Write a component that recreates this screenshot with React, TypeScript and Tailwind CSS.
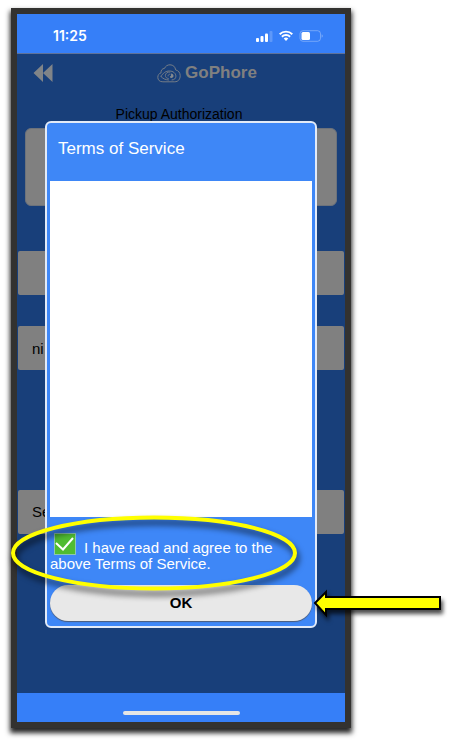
import { useState } from "react";

function StatusBar() {
    return (
        <div className="flex h-10 items-center justify-between border-b border-[#5f7299] bg-[#367ff8] pl-9 pr-[22px] pt-1 text-white">
            <span className="font-['Inter',sans-serif] text-sm font-semibold">11:25</span>
            <div className="flex items-center gap-1.5">
                <svg width="17" height="12" viewBox="0 0 17 12" fill="currentColor" aria-hidden="true">
                    <rect x="0" y="8" width="3" height="4" rx="1" />
                    <rect x="4.500" y="6" width="3" height="6" rx="1" />
                    <rect x="9" y="3.500" width="3" height="8.500" rx="1" />
                    <rect x="13.500" y="1" width="3" height="11" rx="1" opacity=".2" />
                </svg>
                <svg width="14" height="11" viewBox="0 0 14 11" fill="none" stroke="currentColor" strokeWidth="1.900" aria-hidden="true">
                    <path d="M.7 4.200a9 9 0 0 1 12.600 0" />
                    <path d="M2.900 6.700a5.900 5.900 0 0 1 8.200 0" />
                    <path d="M4.700 8.500a3.300 3.300 0 0 1 4.600 0L7 10.900z" fill="currentColor" stroke="none" />
                </svg>
                <svg width="24" height="12" viewBox="0 0 24 12" aria-hidden="true">
                    <rect x="1" y=".7" width="20.500" height="10.600" rx="3" fill="none" stroke="#fff" strokeOpacity=".3" />
                    <rect x="2.500" y="2" width="8.500" height="8" rx="1.500" fill="#fff" />
                    <path d="M22.700 4.200v3.600c1.300-.6 1.300-3 0-3.600z" fill="#fff" fillOpacity=".4" />
                </svg>
            </div>
        </div>
    );
}

function CloudLogo() {
    return (
        <svg width="24" height="19" viewBox="0 0 24 19" fill="none" stroke="#747d88" strokeLinecap="round" aria-hidden="true">
            <path d="M5.500 17.800C2.600 17.800.8 16 .8 13.300c0-2.200 1.300-4 3.200-4.400C3.800 6.300 5.200 4.500 7.500 4.400 8.500 2 10.600.8 13 .8c3.200 0 5.300 2.100 5.600 5.100 2.700.5 4.600 2.800 4.600 5.800 0 3.500-2 6.100-5.100 6.100z" />
            <path d="M4 12.500C6 8.800 9 7 12.300 7c3.900 0 6.600 2.300 6.600 5.200 0 2.200-1.700 3.800-3.900 3.800" />
            <path d="M4 12.500c1.900 2.200 4.300 3.300 7.500 3.500" />
            <path d="M13 8c-2.700-.2-4.600 1.400-4.600 3.500 0 1.700 1.200 2.900 2.900 3M13 10.200c-1.200 0-1.900.7-1.900 1.700" strokeWidth=".9" />
            <path d="M14 9.500c1.500 0 2.500 1 2.500 2.300s-.9 2.200-2.100 2.200c-1 0-1.500-.7-1.500-1.500 1.100 0 1.400-1 1.100-3z" fill="#848a90" stroke="none" />
        </svg>
    );
}

function PickupForm() {
    return (
        <div className="h-[639px] bg-[#183f7a] text-black">
            <header className="grid grid-cols-[1fr_auto_1fr] items-center px-4 pt-[9px]">
                <button type="button" aria-label="Back" className="justify-self-start">
                    <svg width="20" height="20" viewBox="0 0 20 20" fill="#808488" aria-hidden="true">
                        <path d="M10 1v18L.5 10zM19.500 1v18L10 10z" />
                    </svg>
                </button>
                <div className="flex items-center gap-1 pl-13">
                    <CloudLogo />
                    <span className="text-[17px] leading-5 font-bold text-[#808080]">GoPhore</span>
                </div>
            </header>
            <h1 className="mt-[21px] pr-1 text-center text-sm leading-5">Pickup Authorization</h1>
            <div className="mx-2 mt-1 h-[78px] rounded-md border border-[#6c727b] bg-[#808080]" />
            <div className="px-px">
                <input
                    type="text"
                    aria-label="Code"
                    className="mt-[45px] block h-11 w-full rounded-xs bg-[#808080] px-3.5 text-[15px]"
                />
                <input
                    type="text"
                    aria-label="Name"
                    defaultValue="ni"
                    className="mt-[31px] block h-11 w-full rounded-xs bg-[#808080] px-3.5 text-[15px]"
                />
                <button
                    type="button"
                    className="mt-[120px] block h-11 w-full rounded-xs bg-[#808080] px-3.5 text-left text-[15px]"
                >
                    Se
                </button>
            </div>
        </div>
    );
}

function TermsDialog() {
    const [agreed, setAgreed] = useState(true);

    return (
        <div
            role="dialog"
            aria-labelledby="terms-title"
            className="absolute inset-x-7 top-[107px] rounded-md border-2 border-[#e3ebf8] bg-[#3e87f7] px-[3px] pb-[5px]"
        >
            <h2 id="terms-title" className="px-2 pt-4 pb-[22px] text-[17px] leading-5 text-white">
                Terms of Service
            </h2>
            <div className="h-[336px] bg-white" />
            <label htmlFor="agree" className="block h-[68px] pt-4 text-[15px] leading-4 text-white">
                <span className="relative mr-2 ml-1 inline-block size-[22px] align-[-2px]">
                    <input
                        id="agree"
                        type="checkbox"
                        checked={agreed}
                        onChange={(e) => setAgreed(e.target.checked)}
                        className="peer block size-full appearance-none border border-[#8cc8b0] bg-white checked:bg-[#50bc32]"
                    />
                    <svg
                        viewBox="0 0 22 22"
                        fill="none"
                        stroke="#fff"
                        strokeWidth="2"
                        className="pointer-events-none absolute inset-0 hidden peer-checked:block"
                        aria-hidden="true"
                    >
                        <path d="M2 10l7 6.500L19 5" />
                    </svg>
                </span>
                I have read and agree to the above Terms of Service.
            </label>
            <button
                type="button"
                className="h-9 w-full rounded-full bg-[#e8e8e8] text-[15px] font-bold text-black shadow-[0_1px_1px_#4c5c78]"
            >
                OK
            </button>
        </div>
    );
}

function Callouts() {
    return (
        <>
            <svg
                width="300"
                height="100"
                viewBox="0 0 300 100"
                className="pointer-events-none absolute -left-1.5 top-[490px] overflow-visible drop-shadow-[2px_5px_3px_rgba(0,0,0,0.7)]"
                aria-hidden="true"
            >
                <ellipse cx="143" cy="49" rx="141" ry="35.500" fill="none" stroke="#ff0" strokeWidth="4" />
            </svg>
            <svg
                width="130"
                height="30"
                viewBox="0 0 130 30"
                className="pointer-events-none absolute -right-[97px] top-[574px] overflow-visible drop-shadow-[2px_4px_2px_rgba(0,0,0,0.7)]"
                aria-hidden="true"
            >
                <path d="M3 15L14 4V9H128V21H14V27z" fill="#ff0" stroke="#000" strokeWidth="2" />
            </svg>
        </>
    );
}

export default function App() {
    return (
        <main className="min-h-screen bg-white pt-2 pr-[98px] pb-3 pl-[11px] font-['Liberation_Sans',Arial,sans-serif]">
            <div className="relative border-6 border-[#333230] shadow-[0_4px_5px_1px_rgba(0,0,0,0.85)]">
                <StatusBar />
                <PickupForm />
                <div className="flex h-[29px] items-center justify-center bg-[#367ff8] pt-2.5">
                    <div className="h-1 w-[117px] rounded-full bg-[#e5e5e5]" />
                </div>
                <TermsDialog />
                <Callouts />
            </div>
        </main>
    );
}
